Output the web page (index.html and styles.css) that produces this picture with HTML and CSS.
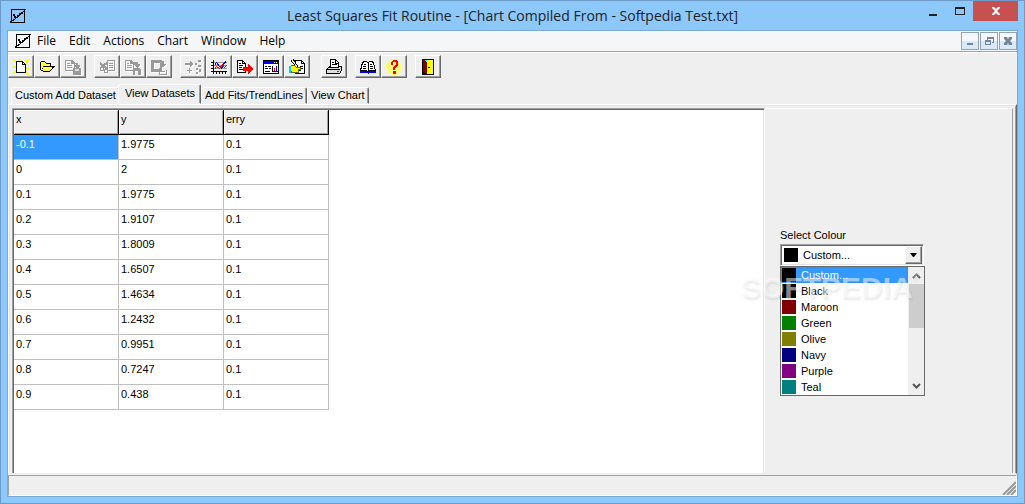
FILE: index.html
```html
<!DOCTYPE html>
<html lang="en">
<head>
    <meta charset="UTF-8">
    <meta name="viewport" content="width=device-width, initial-scale=1.0">
    <title>Least Squares Fit Routine</title>
    <link rel="stylesheet" href="styles.css">
</head>
<body>
    <svg class="defs" width="0" height="0" aria-hidden="true">
        <defs>
            <symbol id="app-icon" viewBox="0 0 16 16">
                <path d="M1 1h15v1h-1v13H0v-2h1zM2 2v10h1v-1h1v2H2v1h12V2z" fill="#000" fill-rule="evenodd"/>
                <path d="M3 13L15 2" stroke="#000" stroke-width="1"/>
                <path d="M3 6h2v2H3zM4 8h2v2H4zM7 7h2v2H7zM9 5h2v2H9zM11 4h2v2h-2z" fill="#000"/>
            </symbol>
        </defs>
    </svg>

    <div class="window">
        <header class="titlebar">
            <svg class="app-icon" width="16" height="16"><use href="#app-icon"/></svg>
            <h1>Least Squares Fit Routine - [Chart Compiled From - Softpedia Test.txt]</h1>
            <div class="window-buttons">
                <button class="min" aria-label="Minimize"><svg width="10" height="10"><path d="M1 8h8v2H1z" fill="#222"/></svg></button>
                <button class="max" aria-label="Maximize"><svg width="10" height="10"><path d="M0 1h10v8H0zM1 3v5h8V3z" fill="#222" fill-rule="evenodd"/></svg></button>
                <button class="close" aria-label="Close"><svg width="8" height="8"><path d="M0 0h2l2 2 2-2h2v1L5 4l3 3v1H6L4 6 2 8H0V7l3-3-3-3z" fill="#fff"/></svg></button>
            </div>
        </header>

        <div class="client">
            <nav class="menubar">
                <svg class="app-icon" width="16" height="16"><use href="#app-icon"/></svg>
                <button>File</button>
                <button>Edit</button>
                <button>Actions</button>
                <button>Chart</button>
                <button>Window</button>
                <button>Help</button>
                <div class="mdi-buttons">
                    <button aria-label="Minimize chart"><svg width="10" height="10"><path d="M2 7h6v2H2z" fill="#75869a"/></svg></button>
                    <button aria-label="Restore chart"><svg width="10" height="10"><path d="M3 1h7v6H8V6h1V3H4v1H3zM1 4h6v5H1zM2 6v2h4V6z" fill="#75869a" fill-rule="evenodd"/></svg></button>
                    <button aria-label="Close chart"><svg width="10" height="10"><path d="M1 1h3l1 2 1-2h3v2L7 5l2 2v2H6L5 7 4 9H1V7l2-2-2-2z" fill="#75869a"/></svg></button>
                </div>
            </nav>

            <div class="toolbar">
                <div class="group">
                    <button aria-label="New">
                        <svg width="16" height="16">
                            <path d="M0 0l4 4M0 8h3M0 15l4-4M16 0l-4 4M12 9h4M16 16l-4-4M7 0v2" stroke="#ff0" stroke-width="2"/>
                            <path d="M3.500 2.500h6l3 3v8h-9z" fill="#fff" stroke="#000"/><path d="M9 2h1v3h3v1H9z"/>
                        </svg>
                    </button>
                    <button aria-label="Open">
                        <svg width="16" height="16">
                            <path d="M1.500 10.500v-7l1-1h3l2 2h4v3h3.500l-4 4.500h-7z" fill="#ffff50" stroke="#000"/>
                            <path d="M4 7h8v1H4zM3 9h1v1H3z"/>
                        </svg>
                    </button>
                    <button aria-label="Save" disabled>
                        <svg width="16" height="16">
                            <path d="M0 1h7l3 3v8H0zM1 2v9h8V5H6V2z" fill="#999" fill-rule="evenodd"/>
                            <path d="M2 4h3v1H2zM2 6h5v1H2zM2 8h5v1H2zM9 4h4v2h2v1l-3 3-3-3V6h2V5H9zM8 9h8v7H8z" fill="#999"/>
                            <path d="M10 10h4v2h-4z" fill="#ddd"/>
                        </svg>
                    </button>
                </div>
                <div class="group">
                    <button aria-label="Cut" disabled>
                        <svg width="16" height="16">
                            <path d="M8 1h8v11H8zM9 2v9h6V2z" fill="#999" fill-rule="evenodd"/>
                            <path d="M10 4h4v1h-4zM10 6h4v1h-4zM10 8h4v1h-4z" fill="#999"/>
                            <path d="M1 4l7 6M8 4l-6 4" stroke="#999" stroke-width="2"/>
                            <circle cx="3" cy="10" r="2" fill="none" stroke="#999" stroke-width="1"/><circle cx="7" cy="12" r="2" fill="none" stroke="#999" stroke-width="1"/>
                        </svg>
                    </button>
                    <button aria-label="Copy" disabled>
                        <svg width="16" height="16">
                            <path d="M0 1h6l3 3v8H0zM1 2v9h7V5H5V2z" fill="#999" fill-rule="evenodd"/>
                            <path d="M2 4h2v1H2zM2 6h5v1H2zM2 8h5v1H2zM9 3h4v2h2v1l-3 3-3-3zM8 9h7v1h1v6h-3v-4h-3v4H8z" fill="#999"/>
                        </svg>
                    </button>
                    <button aria-label="Paste" disabled>
                        <svg width="16" height="16">
                            <path d="M0 1h11v12H0zM3 4v6h6V4z" fill="#999" fill-rule="evenodd"/>
                            <path d="M11 2h2v3h2l-3 4-3-4h2zM8 9h1v6h6v-4h1v5H8zM10 12h4v1h-4z" fill="#999"/>
                        </svg>
                    </button>
                </div>
                <div class="group">
                    <button aria-label="Add point" disabled>
                        <svg width="16" height="16">
                            <path d="M0 4h5V2l4 3-4 3V6H0zM4 9h1v2h2v1H5v2H4v-2H2v-1h2zM13 1h3v2h-3zM10 4h2v2h-2zM13 6h3v2h-3zM11 9h2v2h-2zM14 10h2v3h-2zM11 13h2v2h-2z" fill="#999"/>
                        </svg>
                    </button>
                    <button aria-label="Chart">
                        <svg width="16" height="16">
                            <path d="M3 3h13v1H3zM3 6h13v1H3zM3 9h13v1H3z" fill="#999"/>
                            <path d="M2 1h1v14H2zM0 12h16v1H0zM0 3h2v1H0zM0 6h2v1H0zM0 9h2v1H0zM5 13h1v2H5zM8 13h1v2H8zM11 13h1v2h-1zM14 13h1v2h-1z"/>
                            <path d="M3.500 6.500l2-3 3 4 2 2 3-6 2-1" fill="none" stroke="#00f"/>
                            <path d="M3.500 10.500l2-3 3 2 3-4 2 3 2-2" fill="none" stroke="#f00"/>
                        </svg>
                    </button>
                    <button aria-label="Export">
                        <svg width="16" height="16">
                            <path d="M.500 1.500h5l3 3v9h-8z" fill="#fff" stroke="#000"/>
                            <path d="M5 1h1v3h3v1H5zM2 4h2v1H2zM2 6h4v1H2zM2 8h3v1H2zM2 10h4v1H2z"/>
                            <path d="M6 8h5V5l5 5-5 5v-3H6z" fill="#f00"/>
                        </svg>
                    </button>
                    <button aria-label="Form">
                        <svg width="16" height="16">
                            <path d="M.500 1.500h15v13H.5z" fill="#fff" stroke="#000"/><path d="M1 2h14v3H1z" fill="#00f"/>
                            <path d="M11 3h1v1h-1zM13 3h1v1h-1z" fill="#fff"/>
                            <path d="M2 7h2v1H2zM5 7h3v1H5zM2 9h3v1H2zM6 9h2v1H6zM2 12h5v1H2zM9 7h1v5h5v1H9z"/>
                            <path d="M11 9h1v3h-1z" fill="#f00"/><path d="M13 7h1v5h-1z" fill="#00f"/>
                        </svg>
                    </button>
                    <button aria-label="Edit notes">
                        <svg width="16" height="16">
                            <path d="M6.500 1.500h6l3 3v10h-9z" fill="#fff" stroke="#000"/>
                            <path d="M12 1h1v3h3v1h-4zM11 7h3v1h-3zM10 9h4v1h-4zM9 11h3v1H9z"/>
                            <path d="M2 1l6 8M4 0l5 8" stroke="#000"/>
                            <path d="M3 1l5 7" stroke="#ff0"/>
                            <path d="M2 7l3-1 2 2h4v2H9v3H6l-2 1-3-2z" fill="#ff0" stroke="#660"/><path d="M0 7h2v7H0z" fill="#0cf"/>
                        </svg>
                    </button>
                </div>
                <div class="group print">
                    <button aria-label="Print">
                        <svg width="16" height="16">
                            <path d="M4.500.500h5l3 3v5h-8z" fill="#fff" stroke="#000"/>
                            <path d="M9 1h1v3h3v1H9zM6 3h2v1H6zM6 5h5v1H6z"/>
                            <path d="M3.500 7.500l-3 3v4h13l2-3v-4h-3v1h-9z" fill="#ddd" stroke="#000"/>
                            <path d="M1 10h13v1H1z"/><path d="M11 12h2v1h-2z" fill="#f00"/>
                        </svg>
                    </button>
                </div>
                <div class="group">
                    <button aria-label="Contents">
                        <svg width="16" height="16">
                            <path d="M0 11h16v3H9l-1 1-1-1H0z" fill="#00f"/>
                            <path d="M.500 11.500l2-8 2-1h2l1.500 1 1.500-1h2l2 1 2 8h-5l-2.500 1-2.500-1z" fill="#fff" stroke="#000"/>
                            <path d="M8 3h1v9H8zM4 5h2v1H4zM3 7h3v1H3zM3 9h3v1H3zM10 5h2v1h-2zM10 7h3v1h-3zM10 9h3v1h-3z"/>
                        </svg>
                    </button>
                    <button aria-label="Help">
                        <svg width="16" height="16">
                            <circle cx="8" cy="8" r="8" fill="#ffff78"/>
                            <path d="M5 6V3l2-2h3l2 2v3l-3 3v2H7V8l3-3V3H7v3zM7 12h3v3H7z" fill="#f00"/>
                        </svg>
                    </button>
                </div>
                <div class="group">
                    <button aria-label="Exit">
                        <svg width="16" height="16">
                            <path d="M2 0h12v16H2z"/><path d="M7 1h6v14H7z" fill="#ff0"/>
                            <path d="M3 1h2l2 2v12l-4-2z" fill="#800000"/><path d="M4 1h3v2z" fill="#0ff"/><path d="M8 8h2v1H8z"/>
                        </svg>
                    </button>
                </div>
            </div>

            <div class="tabs" role="tablist">
                <button role="tab">Custom Add Dataset</button>
                <button role="tab" class="active" aria-selected="true">View Datasets</button>
                <button role="tab">Add Fits/TrendLines</button>
                <button role="tab">View Chart</button>
            </div>

            <main class="page">
                <div class="grid-pane">
                    <table>
                        <thead>
                            <tr><th>x</th><th>y</th><th>erry</th></tr>
                        </thead>
                        <tbody>
                            <tr><td class="selected">-0.1</td><td>1.9775</td><td>0.1</td></tr>
                            <tr><td>0</td><td>2</td><td>0.1</td></tr>
                            <tr><td>0.1</td><td>1.9775</td><td>0.1</td></tr>
                            <tr><td>0.2</td><td>1.9107</td><td>0.1</td></tr>
                            <tr><td>0.3</td><td>1.8009</td><td>0.1</td></tr>
                            <tr><td>0.4</td><td>1.6507</td><td>0.1</td></tr>
                            <tr><td>0.5</td><td>1.4634</td><td>0.1</td></tr>
                            <tr><td>0.6</td><td>1.2432</td><td>0.1</td></tr>
                            <tr><td>0.7</td><td>0.9951</td><td>0.1</td></tr>
                            <tr><td>0.8</td><td>0.7247</td><td>0.1</td></tr>
                            <tr><td>0.9</td><td>0.438</td><td>0.1</td></tr>
                        </tbody>
                    </table>
                </div>

                <aside class="side">
                    <label for="colour">Select Colour</label>
                    <div class="combo">
                        <select id="colour">
                            <option>Custom...</option>
                        </select>
                        <span class="arrow"><svg width="7" height="4"><path d="M0 0h7L4 4H3z"/></svg></span>
                        <div class="dropdown">
                            <select size="8" aria-label="Colours">
                                <option class="custom current">Custom...</option>
                                <option class="black">Black</option>
                                <option class="maroon">Maroon</option>
                                <option class="green">Green</option>
                                <option class="olive">Olive</option>
                                <option class="navy">Navy</option>
                                <option class="purple">Purple</option>
                                <option class="teal">Teal</option>
                            </select>
                            <div class="scrollbar">
                                <svg width="9" height="6"><path d="M1 5l3.500-3.500L8 5" fill="none" stroke="#555" stroke-width="2"/></svg>
                                <div class="track"><div class="thumb"></div></div>
                                <svg width="9" height="6"><path d="M1 1l3.500 3.500L8 1" fill="none" stroke="#555" stroke-width="2"/></svg>
                            </div>
                        </div>
                        <div class="watermark">SOFTPEDIA<sup>®</sup></div>
                    </div>
                </aside>
            </main>

            <footer class="statusbar">
                <svg width="14" height="14"><path d="M1 14L14 1M5 14l9-9M9 14l5-5" stroke="#999" stroke-width="2"/></svg>
            </footer>
        </div>
    </div>
</body>
</html>
```
FILE: styles.css
```css
:root {
    --frame: #8dc8fb;
    --face: #efefef;
    --shadow: #a0a0a0;
    --dark: #696969;
    --light: #e3e3e3;
    --highlight: #3399ff;
}

* {
    box-sizing: border-box;
}

body {
    margin: 0;
    font-family: "Liberation Sans", Arial, sans-serif;
    font-size: 11px;
    line-height: 13px;
    color: #000;
}

button {
    font: inherit;
    color: inherit;
    padding: 0;
    border: none;
    background: none;
}

svg {
    display: block;
    flex: none;
}

.defs {
    position: absolute;
}

.app-icon {
    shape-rendering: crispEdges;
}

.window {
    display: flex;
    flex-direction: column;
    min-height: 100vh;
    padding: 0 6px 6px;
    background: var(--frame);
    border: 1px solid #6c9bc8;
}

/* title bar */
.titlebar {
    display: grid;
    grid-template-columns: 1fr auto 1fr;
    height: 29px;
}

.titlebar .app-icon {
    margin: 7px 0 0 3px;
}

.titlebar h1 {
    margin: 0;
    font-family: "Open Sans", "Segoe UI", sans-serif;
    font-size: 14px;
    font-weight: 400;
    line-height: 29px;
    color: #222;
    white-space: nowrap;
}

.window-buttons {
    display: flex;
    justify-content: flex-end;
}

.window-buttons button {
    display: flex;
    align-items: center;
    justify-content: center;
    width: 27px;
    height: 20px;
}

.window-buttons .close {
    width: 45px;
    background: #c75050;
}

.client {
    flex: 1;
    display: flex;
    flex-direction: column;
    background: var(--face);
    border: 1px solid #7aa9d6;
}

/* menu */
.menubar {
    display: flex;
    align-items: center;
    height: 21px;
    padding-left: 7px;
    background: #f5f6f7;
    border-bottom: 1px solid var(--shadow);
    font-family: "Open Sans", "Segoe UI", sans-serif;
    font-size: 12px;
    line-height: 18px;
}

.menubar > button {
    padding: 0 7px 0 6px;
}

.mdi-buttons {
    display: flex;
    gap: 1px;
    margin-left: auto;
}

.mdi-buttons button {
    display: flex;
    align-items: center;
    justify-content: center;
    width: 18px;
    height: 18px;
    background: linear-gradient(#f4f8fc 50%, #dae9f7 50%);
    border: 1px solid #93a3b5;
}

/* toolbar */
.toolbar {
    display: flex;
    gap: 8px;
    padding-top: 2px;
    border-top: 1px solid #fff;
}

.group {
    display: flex;
}

.group.print {
    margin-left: 3px;
}

.toolbar button {
    display: flex;
    align-items: center;
    justify-content: center;
    width: 26px;
    height: 23px;
    border: 1px solid;
    border-color: #fff var(--dark) var(--dark) #fff;
    box-shadow: inset -1px -1px var(--shadow);
}

.toolbar svg {
    shape-rendering: crispEdges;
}

.toolbar button:disabled svg {
    filter: drop-shadow(1px 1px 0 #fff);
}

/* tabs */
.tabs {
    display: flex;
    align-items: flex-end;
    height: 26px;
    padding-left: 3px;
}

.tabs button {
    height: 17px;
    padding: 0 3px;
    border: 1px solid;
    border-color: #fff var(--dark) transparent #fff;
    border-radius: 2px 2px 0 0;
    box-shadow: inset -1px 0 var(--shadow);
    white-space: nowrap;
}

.tabs .active {
    height: 20px;
    margin-left: -2px;
    padding: 0 5px 2px 6px;
    background: var(--face);
}

.page {
    flex: 1;
    display: flex;
    padding: 3px 0 0 2px;
    border: 1px solid;
    border-color: #fff var(--dark) transparent #fff;
    box-shadow: inset 1px 1px var(--light), inset -1px 0 var(--shadow);
}

.grid-pane {
    flex: 1;
    margin-left: 1px;
    background: #fff;
    border: 1px solid;
    border-color: var(--shadow) #fff transparent var(--shadow);
    border-bottom: none;
    box-shadow: inset 1px 1px var(--dark), inset -1px 0 var(--light);
    padding: 1px;
}

table {
    border-collapse: separate;
    border-spacing: 0;
    table-layout: fixed;
    width: 315px;
}

th,
td {
    height: 25px;
    padding: 3px 2px;
    font-weight: 400;
    text-align: left;
    vertical-align: top;
    border-right: 1px solid #c0c0c0;
    border-bottom: 1px solid #c0c0c0;
}

th {
    background: var(--face);
    border-color: #000;
    box-shadow: inset 1px 1px #fff, inset -1px -1px var(--shadow);
}

td.selected {
    background: var(--highlight);
    color: #fff;
}

/* colour picker */
.side {
    width: 248px;
    margin-right: 3px;
    padding: 120px 88px 0 15px;
    border-top: 1px solid #fff;
    border-right: 1px solid var(--shadow);
}

.side label {
    display: block;
    margin-bottom: 2px;
}

.combo {
    position: relative;
    display: flex;
    height: 22px;
    background: #fff;
    border: 1px solid;
    border-color: var(--shadow) #fff #fff var(--shadow);
    box-shadow: inset 1px 1px var(--dark), inset -1px -1px var(--light);
}

.combo select {
    flex: 1;
    min-width: 0;
    margin: 0;
    padding: 0;
    border: none;
    outline: none;
    border-radius: 0;
    appearance: none;
    background: none;
    font: inherit;
    color: #000;
}

#colour {
    padding-left: 22px;
    background: linear-gradient(#000, #000) 3px 3px / 14px 14px no-repeat;
}

.arrow {
    display: flex;
    align-items: center;
    justify-content: center;
    width: 17px;
    margin: 1px;
    background: var(--face);
    border: 1px solid;
    border-color: #fff var(--dark) var(--dark) #fff;
    box-shadow: inset -1px -1px var(--shadow);
}

.dropdown {
    position: absolute;
    top: 21px;
    left: -1px;
    right: -2px;
    display: flex;
    height: 130px;
    background: #fff;
    border: 1px solid var(--dark);
}

.dropdown select {
    height: 128px;
    overflow: hidden;
}

.dropdown option {
    height: 16px;
    min-height: 16px;
    padding: 2px 0 0 20px;
    line-height: 14px;
    background: linear-gradient(var(--swatch), var(--swatch)) 1px 1px / 14px 14px no-repeat;
}

.dropdown .current {
    background-color: var(--highlight);
    color: #fff;
    outline: 1px dotted #c60;
    outline-offset: -1px;
}

.custom, .black { --swatch: #000; }
.maroon { --swatch: #800000; }
.green { --swatch: #008000; }
.olive { --swatch: #808000; }
.navy { --swatch: #000080; }
.purple { --swatch: #800080; }
.teal { --swatch: #008080; }

.scrollbar {
    display: flex;
    flex-direction: column;
    align-items: center;
    width: 16px;
    padding: 6px 0;
    background: var(--face);
}

.track {
    flex: 1;
    width: 15px;
    padding: 5px 0;
}

.thumb {
    height: 44px;
    background: #cdcdcd;
}

.watermark {
    position: absolute;
    top: 28px;
    left: -40px;
    font-size: 30px;
    font-weight: 700;
    line-height: 30px;
    color: rgba(255, 255, 255, 0.5);
    text-shadow: 1px 2px 2px rgba(120, 120, 120, 0.15);
    pointer-events: none;
    white-space: nowrap;
}

.watermark sup {
    font-size: 8px;
    line-height: 8px;
    vertical-align: top;
}

.statusbar {
    display: flex;
    justify-content: flex-end;
    align-items: flex-end;
    height: 21px;
    margin-top: 1px;
    border: 1px solid;
    border-color: var(--shadow) #fff #fff var(--shadow);
}
```
